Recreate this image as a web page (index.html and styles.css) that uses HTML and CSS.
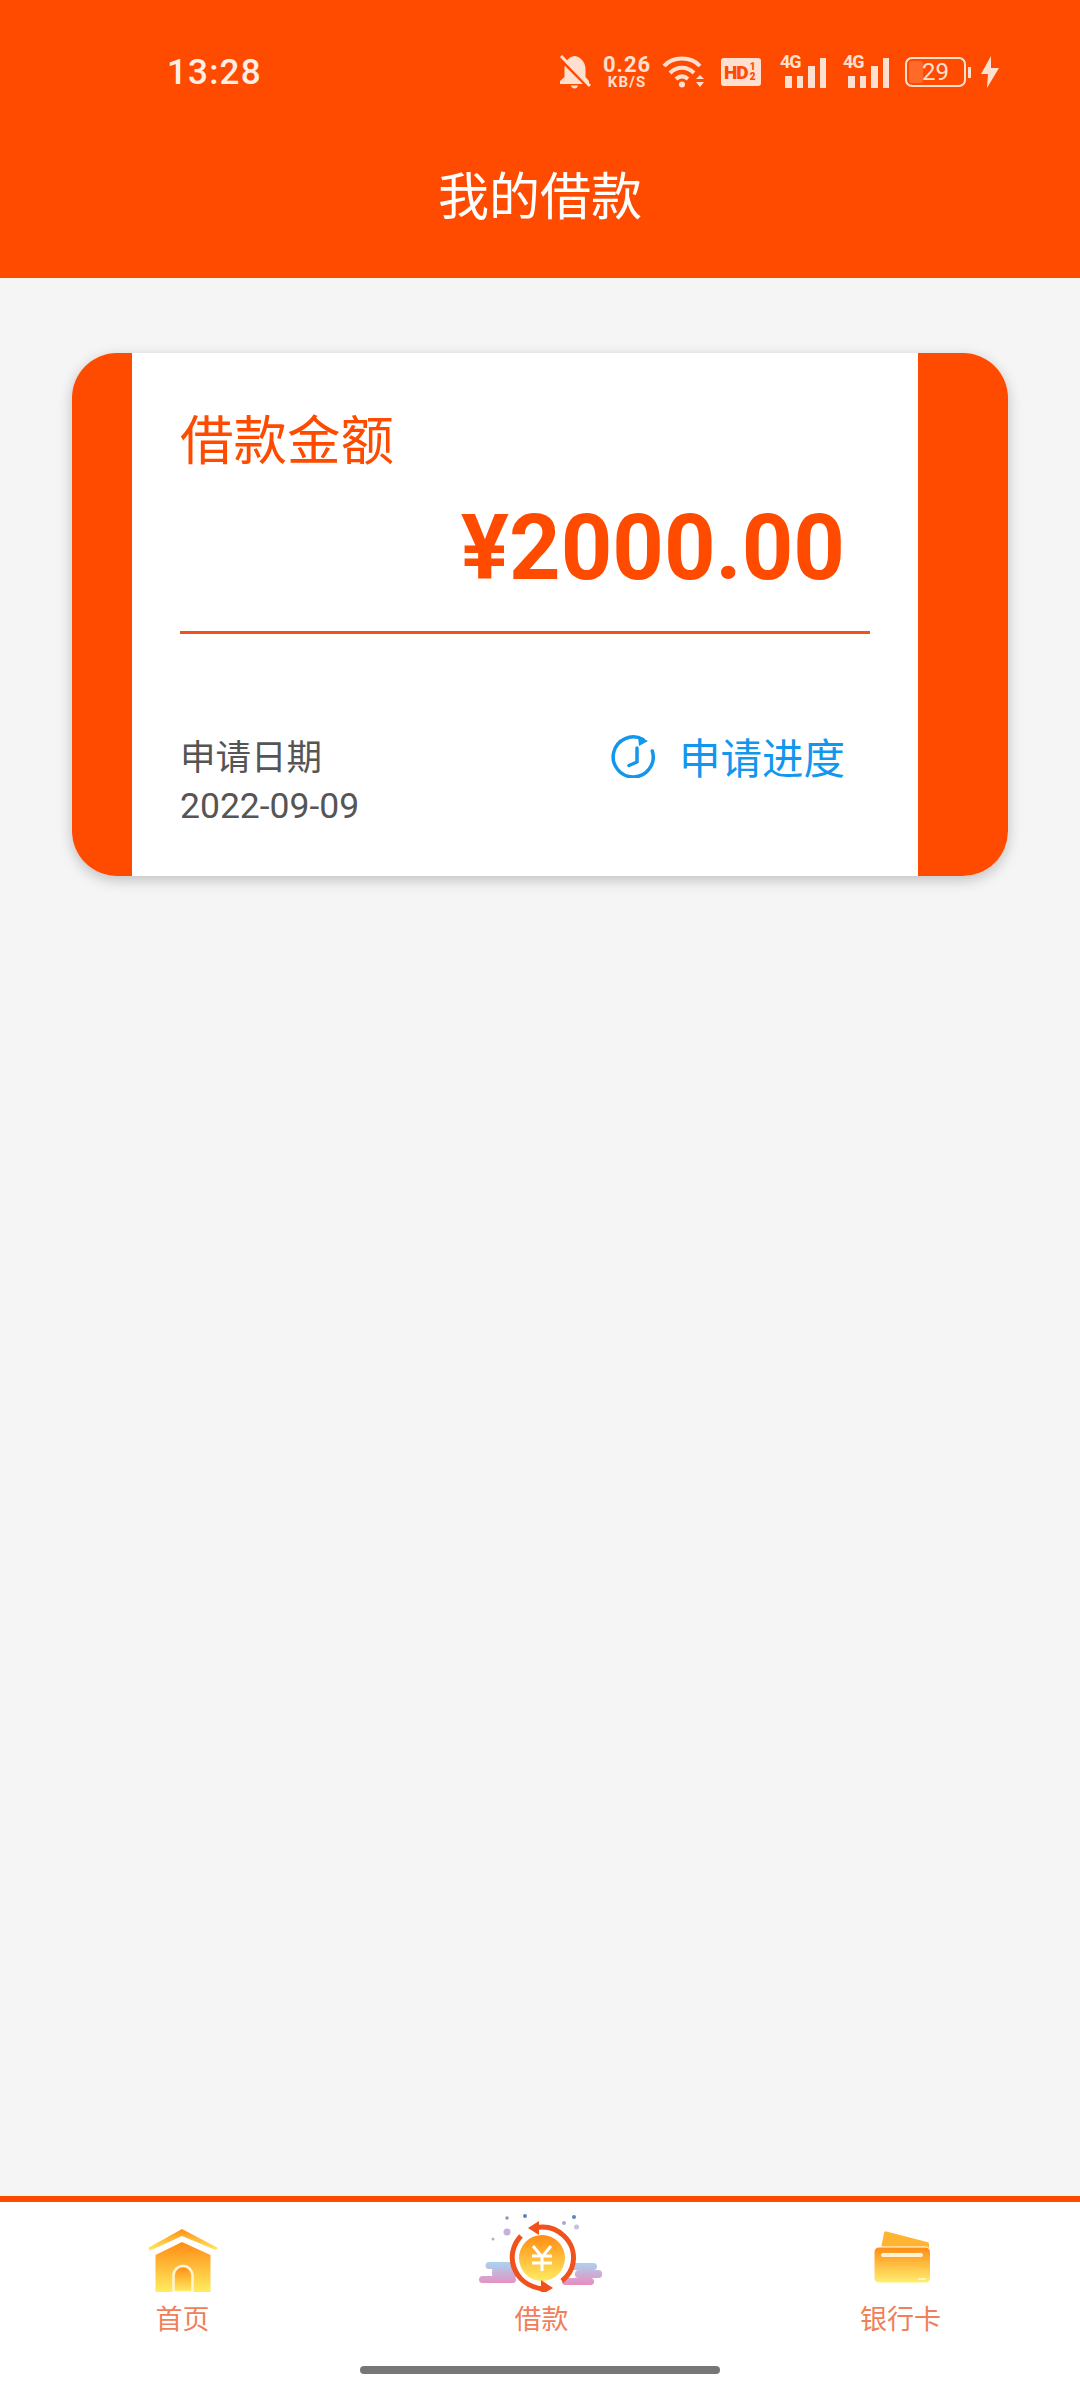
FILE: index.html
```html
<!DOCTYPE html>
<html>
<head>
    <title>我的借款</title>
    <link rel="stylesheet" href="styles.css">
</head>
<body>
    <header class="header">
        <div class="status">
            <span class="time">13:28</span>
            <div class="status-icons">
                <svg class="ic-bell" width="32" height="34" viewBox="0 0 32 34">
                    <path d="M15.500 1C8.500 2 5.500 8 5.500 14.500V22L1 26v3h29v-3l-3.500-4v-8C26.500 8 22.500 2 15.500 1zM12 30.500h7c-.4 1.800-1.800 3-3.500 3S12.400 32.300 12 30.500z" fill="#ffe0d0"/>
                    <path d="M0 3l28 28" stroke="#ff4b00" stroke-width="3"/>
                    <path d="M2 1l29 30" stroke="#ffe0d0" stroke-width="3"/>
                </svg>
                <div class="speed">
                    <span class="speed-num">0.26</span>
                    <span class="speed-unit">KB/S</span>
                </div>
                <svg class="ic-wifi" width="44" height="34" viewBox="0 0 44 34">
                    <g fill="none" stroke="#ffe0d0" stroke-width="4">
                        <path d="M2 11C11 1 29 1 38 11"/>
                        <path d="M8 18c7-7 17-7 24 0"/>
                        <path d="M14 24c4-3.500 8-3.500 12 0"/>
                    </g>
                    <circle cx="20" cy="29.500" r="3" fill="#ffe0d0"/>
                    <path d="M38 20l4 4h-8zM34 27h8l-4 5z" fill="#ffe0d0"/>
                </svg>
                <div class="hd">HD<span class="hd-sub">1<br>2</span></div>
                <div class="signal">
                    <span class="net">4G</span>
                    <i class="bar b1"></i><i class="bar b1"></i><i class="bar b2"></i><i class="bar b3"></i>
                </div>
                <div class="signal">
                    <span class="net">4G</span>
                    <i class="bar b1"></i><i class="bar b1"></i><i class="bar b2"></i><i class="bar b3"></i>
                </div>
                <div class="battery">
                    <div class="battery-body"><i class="battery-fill"></i><span class="battery-num">29</span></div>
                    <i class="battery-nub"></i>
                </div>
                <svg class="ic-bolt" width="20" height="32" viewBox="0 0 20 32">
                    <path d="M11 0L1 18h7l-1 14 12-20h-8z" fill="#ffe0d0"/>
                </svg>
            </div>
        </div>
        <h1 class="title">我的借款</h1>
    </header>

    <main class="main">
        <div class="card">
            <div class="card-left"></div>
            <div class="card-body">
                <div class="card-label">借款金额</div>
                <div class="card-amount">¥2000.00</div>
                <div class="card-line"></div>
                <div class="card-foot">
                    <div class="card-date">
                        <div>申请日期</div>
                        <div>2022-09-09</div>
                    </div>
                    <div class="card-progress">
                        <svg width="44" height="44" viewBox="0 0 44 44">
                            <path d="M32 5.500A20 20 0 1 0 41.300 17" fill="none" stroke="#1296ee" stroke-width="3.500" stroke-linecap="round"/>
                            <path d="M27 2l10 5-9 5z" fill="#1296ee"/>
                            <path d="M26 14v14l-8 3.500" fill="none" stroke="#1296ee" stroke-width="3.500" stroke-linecap="round" stroke-linejoin="round"/>
                        </svg>
                        <span>申请进度</span>
                    </div>
                </div>
            </div>
            <div class="card-right"></div>
        </div>
    </main>

    <nav class="nav">
        <div class="nav-item">
            <svg width="130" height="80" viewBox="0 0 130 80">
                <defs>
                    <linearGradient id="gold" x1="0" y1="0" x2="0" y2="1">
                        <stop offset="0" stop-color="#ff8c14"/>
                        <stop offset="1" stop-color="#ffec60"/>
                    </linearGradient>
                </defs>
                <path d="M30 36L64 17l36 19-2.500 2L64 24 32.500 38.500z" fill="url(#gold)"/>
                <path d="M37.500 43L64 30l28.500 13v37h-55z" fill="url(#gold)"/>
                <path d="M55.500 80V63.500a9.500 9.500 0 0 1 19 0V80z" fill="url(#gold)" stroke="#fff6d8" stroke-width="2.500"/>
            </svg>
            <span>首页</span>
        </div>
        <div class="nav-item">
            <svg width="130" height="80" viewBox="0 0 130 80">
                <defs>
                    <linearGradient id="coin" x1="0" y1="0" x2="0" y2="1">
                        <stop offset="0" stop-color="#ff8c14"/>
                        <stop offset="1" stop-color="#ffec60"/>
                    </linearGradient>
                    <linearGradient id="cloud" gradientUnits="userSpaceOnUse" x1="0" y1="50" x2="0" y2="72">
                        <stop offset="0" stop-color="#a9d4f2"/>
                        <stop offset="1" stop-color="#e88fc0"/>
                    </linearGradient>
                </defs>
                <circle cx="30" cy="6" r="1.800" fill="#8a9cc0"/>
                <circle cx="48" cy="4" r="2" fill="#5c88b8"/>
                <circle cx="30" cy="20" r="3.500" fill="#c8b0dc"/>
                <circle cx="16" cy="27" r="1.500" fill="#a8b4cc"/>
                <circle cx="87" cy="11" r="2" fill="#a8a8d0"/>
                <circle cx="97" cy="5" r="2" fill="#5c88b8"/>
                <circle cx="99.500" cy="15" r="2.500" fill="#c8c0dc"/>
                <g fill="url(#cloud)">
                    <rect x="8.500" y="50" width="32" height="7" rx="3.500"/>
                    <rect x="15" y="56" width="30" height="9" rx="3"/>
                    <rect x="2" y="64" width="37" height="7" rx="3.500"/>
                    <rect x="93" y="51" width="27" height="7" rx="3.500"/>
                    <rect x="98" y="58" width="27" height="8" rx="3.500"/>
                    <rect x="85" y="66" width="32" height="7" rx="3.500"/>
                </g>
                <circle cx="65" cy="46" r="27" fill="#fff"/>
                <circle cx="65" cy="46" r="23" fill="url(#coin)"/>
                <g fill="none" stroke="#fff" stroke-width="3">
                    <path d="M56 34l9 11 9-11M55 44h20M55 51h20M65 44v15"/>
                </g>
                <g fill="none" stroke="#f1511b" stroke-width="5">
                    <path d="M44 24C27 42 35 72 65 77"/>
                    <path d="M58 16c22-5 42 14 38 35-1 7-5 13-11 18"/>
                </g>
                <path d="M51 16l11-7v14zM76 76l-12-8v15z" fill="#f1511b"/>
            </svg>
            <span>借款</span>
        </div>
        <div class="nav-item">
            <svg width="130" height="80" viewBox="0 0 130 80">
                <defs>
                    <linearGradient id="front" x1="0" y1="0" x2="0" y2="1">
                        <stop offset="0" stop-color="#ff8c14"/>
                        <stop offset="1" stop-color="#fff070"/>
                    </linearGradient>
                </defs>
                <path d="M45 36l3-15c.3-1.500 1-1.800 2.500-1.500L91 30c1.500.4 2 1 2 2.500V36z" fill="#ffb432"/>
                <rect x="38" y="35" width="56.500" height="36" rx="5" fill="url(#front)" stroke="#fff" stroke-width="1"/>
                <rect x="45" y="41" width="42" height="4" rx="2" fill="#fff3d4"/>
                <rect x="82" y="66" width="8" height="2" rx="1" fill="#fff6c8"/>
            </svg>
            <span>银行卡</span>
        </div>
        <div class="home-bar"></div>
    </nav>
</body>
</html>
```

FILE: styles.css
```css
* {
    box-sizing: border-box;
}

body {
    margin: 0;
    width: 1080px;
    height: 2400px;
    display: flex;
    flex-direction: column;
    background-color: #f5f5f5;
    font-family: "Noto Sans CJK SC", Roboto, sans-serif;
}

.header {
    height: 278px;
    background-color: #ff4b00;
    color: #fff;
}

.status {
    height: 144px;
    padding: 0 80px 0 167px;
    display: flex;
    align-items: center;
    justify-content: space-between;
}

.time {
    font-family: Roboto, sans-serif;
    font-size: 35px;
    font-weight: 500;
    letter-spacing: 1.200px;
    color: #ffeee6;
}

.status-icons {
    display: flex;
    align-items: center;
    color: #ffe0d0;
}

.ic-bell {
    margin-right: 11px;
}

.speed {
    width: 50px;
    margin-right: 10px;
    display: flex;
    flex-direction: column;
    align-items: center;
    font-family: Roboto, sans-serif;
    font-weight: 700;
}

.speed-num {
    font-size: 22px;
    line-height: 21px;
    letter-spacing: 1px;
}

.speed-unit {
    font-size: 15px;
    line-height: 15px;
    letter-spacing: 1.200px;
}

.ic-wifi {
    margin-right: 15px;
}

.hd {
    width: 40px;
    height: 28px;
    margin-right: 19px;
    padding-left: 3px;
    border-radius: 3px;
    background-color: #ffe0d0;
    color: #ff4b00;
    display: flex;
    align-items: center;
    font-family: Roboto, sans-serif;
    font-size: 19px;
    font-weight: 900;
    letter-spacing: -1px;
}

.hd-sub {
    margin-left: 2px;
    font-size: 10px;
    line-height: 10px;
}

.signal {
    position: relative;
    width: 46px;
    height: 32px;
    margin-right: 17px;
    display: flex;
    align-items: flex-end;
    justify-content: flex-end;
    gap: 5px;
}

.net {
    position: absolute;
    left: 0;
    top: -3px;
    font-family: Roboto, sans-serif;
    font-size: 18px;
    line-height: 18px;
    font-weight: 700;
    letter-spacing: -1px;
}

.bar {
    width: 6.500px;
    background-color: #ffe0d0;
}

.b1 {
    height: 12px;
}

.b2 {
    height: 22px;
}

.b3 {
    height: 30px;
}

.battery {
    margin-left: -1px;
    margin-right: 9px;
    display: flex;
    align-items: center;
}

.battery-body {
    position: relative;
    width: 61px;
    height: 30px;
    border: 2px solid #ffe0d0;
    border-radius: 7px;
    overflow: hidden;
    display: flex;
    align-items: center;
    justify-content: center;
}

.battery-fill {
    position: absolute;
    left: 2px;
    top: 2px;
    bottom: 2px;
    width: 14px;
    border-radius: 3px;
    background-color: #ff6a2a;
}

.battery-num {
    position: relative;
    font-family: Roboto, sans-serif;
    font-size: 24px;
    color: #ffe0d0;
}

.battery-nub {
    width: 3px;
    height: 11px;
    margin-left: 2px;
    background-color: #ffe0d0;
}

.title {
    margin: 0;
    font-size: 51px;
    font-weight: 400;
    line-height: 98px;
    text-align: center;
}

.main {
    flex: 1;
    padding: 75px 72px 0;
}

.card {
    height: 523px;
    display: flex;
    border-radius: 45px;
    overflow: hidden;
    background-color: #fff;
    box-shadow: 0 4px 14px rgba(0, 0, 0, 0.22);
}

.card-left {
    width: 60px;
    background-color: #ff4b00;
}

.card-right {
    width: 90px;
    background-color: #ff4b00;
}

.card-body {
    flex: 1;
    padding: 49px 48px 0;
}

.card-label {
    font-size: 53.500px;
    line-height: 70px;
    color: #ff4b00;
}

.card-amount {
    margin-top: 27px;
    padding-right: 25px;
    font-family: Roboto, sans-serif;
    font-size: 90px;
    font-weight: 700;
    line-height: 100px;
    text-align: right;
    color: #ff4b00;
}

.card-line {
    height: 3px;
    margin-top: 32px;
    background-color: #f1511b;
}

.card-foot {
    margin-top: 99px;
    display: flex;
    justify-content: space-between;
    align-items: flex-start;
}

.card-date {
    padding-top: 1px;
    font-family: Roboto, "Noto Sans CJK SC", sans-serif;
    font-size: 35.500px;
    line-height: 48px;
    color: #555;
}

.card-progress {
    height: 46px;
    padding-right: 25px;
    display: flex;
    align-items: center;
    gap: 24px;
    font-size: 41.500px;
    color: #1296ee;
}

.nav {
    position: relative;
    height: 204px;
    padding: 10px 0 0 3px;
    border-top: 6px solid #ff4b00;
    background-color: #fff;
    display: grid;
    grid-template-columns: repeat(3, 1fr);
    align-content: start;
}

.nav-item {
    display: flex;
    flex-direction: column;
    align-items: center;
    font-size: 27px;
    line-height: 36px;
    color: #f0805a;
}

.nav-item svg {
    display: block;
}

.nav-item span {
    margin-top: 8px;
}

.home-bar {
    position: absolute;
    left: 360px;
    bottom: 26px;
    width: 360px;
    height: 8px;
    border-radius: 4px;
    background-color: #777;
}
```
